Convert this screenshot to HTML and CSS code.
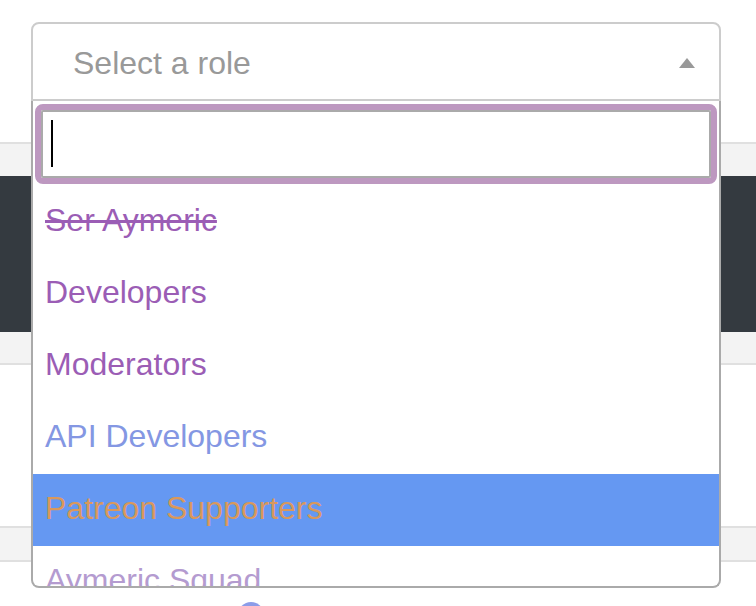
FILE: index.html
```html
<!DOCTYPE html>
<html lang="en">
<head>
<meta charset="utf-8">
<title>Select a role</title>
<link rel="stylesheet" href="styles.css">
</head>
<body>
<div class="page">
  <div class="role-select">
    <div class="select-head">
      <span class="placeholder">Select a role</span>
      <span class="arrow"></span>
    </div>
    <div class="dropdown">
      <div class="search-wrap">
        <div class="search-ring">
          <div class="search-field"><span class="caret"></span></div>
        </div>
      </div>
      <ul class="results">
        <li class="opt c-purple struck">Ser Aymeric</li>
        <li class="opt c-purple">Developers</li>
        <li class="opt c-purple">Moderators</li>
        <li class="opt c-blurple">API Developers</li>
        <li class="opt c-orange highlighted">Patreon Supporters</li>
        <li class="opt c-lilac">Aymeric Squad</li>
      </ul>
    </div>
  </div>

  <div class="backdrop">
    <div class="band band-head"></div>
    <div class="band band-dark"></div>
    <div class="band band-foot"></div>
    <div class="gap"></div>
    <div class="band band-row"></div>
    <div class="avatar"></div>
  </div>
</div>
</body>
</html>
```

FILE: styles.css
```css
html, body {
  margin: 0;
  padding: 0;
  overflow: hidden;
  background: #ffffff;
  font-family: "Liberation Sans", Arial, Helvetica, sans-serif;
}

.page {
  padding-top: 22px;
}

.role-select {
  position: relative;
  margin: 0 35px 0 31px;
  z-index: 2;
}

.select-head {
  box-sizing: border-box;
  height: 79px;
  border: 2px solid #cccccc;
  border-radius: 8px 8px 0 0;
  background: #ffffff;
  display: flex;
  align-items: center;
  justify-content: space-between;
  padding: 3px 24px 0 40px;
}

.placeholder {
  font-size: 32px;
  color: #999999;
}

.arrow {
  width: 0;
  height: 0;
  border-left: 8px solid transparent;
  border-right: 8px solid transparent;
  border-bottom: 10px solid #999999;
}

.dropdown {
  position: absolute;
  top: 100%;
  left: 0;
  right: 0;
  box-sizing: border-box;
  border: 2px solid #aaaaaa;
  border-top: none;
  border-radius: 0 0 8px 8px;
  background: #ffffff;
  overflow: hidden;
}

.search-wrap {
  padding: 3px 2px 2px 2px;
}

.search-ring {
  box-sizing: border-box;
  height: 80px;
  border: 6px solid #bd98c0;
  border-radius: 8px;
}

.search-field {
  box-sizing: border-box;
  height: 100%;
  border: 2px solid #aaaaaa;
  border-radius: 2px;
  background: #ffffff;
  padding: 8px 0 0 8px;
}

.caret {
  display: block;
  width: 2px;
  height: 47px;
  background: #000000;
}

.results {
  list-style: none;
  margin: 0;
  padding: 0;
  height: 400px;
  overflow: hidden;
}

.opt {
  box-sizing: border-box;
  height: 72px;
  line-height: 69px;
  padding: 0 0 3px 12px;
  font-size: 32px;
  white-space: nowrap;
}

.struck {
  text-decoration: line-through;
  text-decoration-thickness: 3px;
}

.c-purple { color: #9b5db5; }
.c-blurple { color: #8497e3; }
.c-orange { color: #d9985c; }
.c-lilac { color: #b49bd0; }

.highlighted {
  background: #6598f2;
}

.backdrop {
  margin-top: 41px;
}

.band-head {
  border-top: 2px solid #e0e0e0;
  height: 32px;
  background: #f3f3f3;
}

.band-dark {
  height: 156px;
  background: #343a40;
}

.band-foot {
  height: 31px;
  background: #f3f3f3;
  border-bottom: 2px solid #e0e0e0;
}

.gap {
  height: 161px;
}

.band-row {
  border-top: 2px solid #e0e0e0;
  border-bottom: 2px solid #e0e0e0;
  height: 32px;
  background: #f3f3f3;
}

.avatar {
  margin: 40px 0 0 238px;
  width: 26px;
  height: 26px;
  border-radius: 50%;
  background: #8c9ce8;
}
```
